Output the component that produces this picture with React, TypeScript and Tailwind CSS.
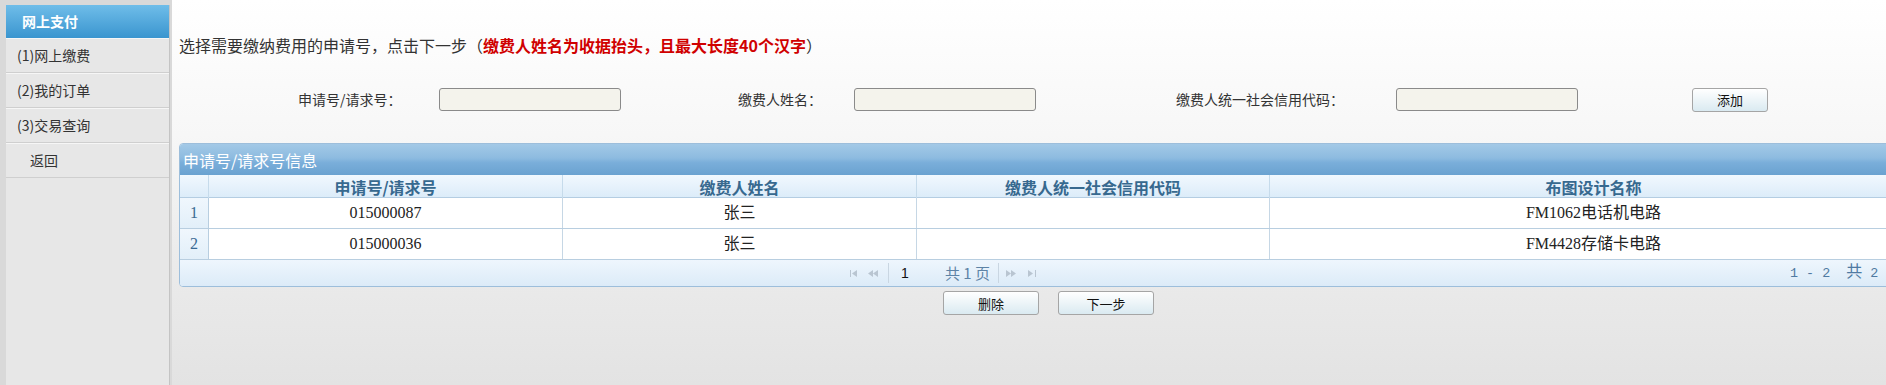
import React from "react";

const rows = [
  { n: 1, id: "015000087", name: "张三", code: "", design: "FM1062电话机电路" },
  { n: 2, id: "015000036", name: "张三", code: "", design: "FM4428存储卡电路" },
];

const navItems = [
  { label: "(1)网上缴费", indent: false },
  { label: "(2)我的订单", indent: false },
  { label: "(3)交易查询", indent: false },
  { label: "返回", indent: true },
];

function FirstIcon() {
  return (
    <svg width="8" height="7" viewBox="0 0 8 7" className="block">
      <rect x="0" y="0" width="1" height="7" fill="#b9c5d1" />
      <path d="M7 0 L2 3.5 L7 7 Z" fill="#b9c5d1" />
    </svg>
  );
}
function PrevIcon() {
  return (
    <svg width="10" height="7" viewBox="0 0 10 7" className="block">
      <path d="M5 0 L0 3.5 L5 7 Z M10 0 L5 3.5 L10 7 Z" fill="#b9c5d1" />
    </svg>
  );
}
function NextIcon() {
  return (
    <svg width="10" height="7" viewBox="0 0 10 7" className="block">
      <path d="M0 0 L5 3.5 L0 7 Z M5 0 L10 3.5 L5 7 Z" fill="#b9c5d1" />
    </svg>
  );
}
function LastIcon() {
  return (
    <svg width="8" height="7" viewBox="0 0 8 7" className="block">
      <path d="M0 0 L5 3.5 L0 7 Z" fill="#b9c5d1" />
      <rect x="7" y="0" width="1" height="7" fill="#b9c5d1" />
    </svg>
  );
}

function Btn({ children, w }: { children: React.ReactNode; w: string }) {
  return (
    <button
      className={`${w} h-[24px] border border-[#a5a5a5] rounded-[3px] bg-[linear-gradient(to_bottom,#ffffff,#daeaf1)] text-[13px] text-[#111] font-['Noto_Sans_CJK_SC',sans-serif] leading-none flex items-center justify-center`}
    >
      {children}
    </button>
  );
}

export default function App() {
  return (
    <div className="w-full h-[385px] overflow-hidden font-['Noto_Sans_CJK_SC',sans-serif]">
      <div className="flex w-[1925px] h-[385px]">
        {/* Sidebar */}
        <div className="w-[172px] shrink-0 h-[385px] bg-[#d9d9d9] pt-[5px] pl-[6px] pr-[2px]">
          <div className="h-full w-[164px] bg-[#e7e7e7] border-r border-[#c4c4c4]">
            <div className="h-[33px] bg-[linear-gradient(to_bottom,#6fbde9,#3a95cf)] pl-[16px] flex items-center text-white font-bold text-[14px]">
              网上支付
            </div>
            {navItems.map((it) => (
              <div
                key={it.label}
                className={`h-[35px] border-t border-t-[#f6f6f6] border-b border-b-[#cfcfcf] flex items-center text-[14px] text-[#333] ${
                  it.indent ? "pl-[24px]" : "pl-[11px]"
                }`}
              >
                {it.label}
              </div>
            ))}
          </div>
        </div>

        {/* Main */}
        <div className="w-[1753px] shrink-0 h-[385px] px-[7px] bg-[linear-gradient(to_bottom,#ffffff_0%,#f7f7f7_35%,#ececec_65%,#e3e3e3_100%)]">
          <div className="pt-[35px] leading-[20px] text-[16px] text-[#333] whitespace-nowrap">
            选择需要缴纳费用的申请号，点击下一步（
            <span className="text-[#d00000] font-bold">缴费人姓名为收据抬头，且最大长度40个汉字</span>）
          </div>

          <div className="mt-[33px] flex items-center h-[23px] text-[14px] text-[#333] whitespace-nowrap">
            <div className="ml-[119px] w-[141px]">申请号/请求号：</div>
            <input className="w-[182px] h-[23px] bg-[#f4f3ec] border border-[#8a8a8a] rounded-[3px] outline-none" />
            <div className="ml-[117px] w-[116px]">缴费人姓名：</div>
            <input className="w-[182px] h-[23px] bg-[#f4f3ec] border border-[#8a8a8a] rounded-[3px] outline-none" />
            <div className="ml-[140px] w-[220px]">缴费人统一社会信用代码：</div>
            <input className="w-[182px] h-[23px] bg-[#f4f3ec] border border-[#8a8a8a] rounded-[3px] outline-none" />
            <div className="ml-[114px]">
              <Btn w="w-[76px]">添加</Btn>
            </div>
          </div>

          {/* Panel */}
          <div className="mt-[32px] border border-[#9dbedb] rounded-[4px] overflow-hidden bg-white">
            <div className="h-[31px] flex items-center pl-[3px] text-white text-[16px] bg-[linear-gradient(to_bottom,#a3c9e7_0%,#8dbbe0_45%,#7aaeda_60%,#6aa2d0_100%)]">
              申请号/请求号信息
            </div>
            <div className="grid grid-cols-[29px_354px_354px_353px_1fr] h-[23px] border-b border-[#b4cde2] bg-[linear-gradient(to_bottom,#f1f8fe,#dcecf9)] text-[16px] font-bold text-[#37698f]">
              <div className="border-r border-[#c6dbeb]" />
              <div className="border-r border-[#c6dbeb] flex items-center justify-center">申请号/请求号</div>
              <div className="border-r border-[#c6dbeb] flex items-center justify-center">缴费人姓名</div>
              <div className="border-r border-[#c6dbeb] flex items-center justify-center">缴费人统一社会信用代码</div>
              <div className="flex items-center justify-center">布图设计名称</div>
            </div>
            {rows.map((r) => (
              <div
                key={r.n}
                className="grid grid-cols-[29px_354px_354px_353px_1fr] h-[31px] border-b border-[#b8cee0] text-[16px] text-[#222] font-['Liberation_Serif','Noto_Sans_CJK_SC',serif]"
              >
                <div className="border-r border-[#b8cee0] bg-[linear-gradient(to_bottom,#f0f7fd,#e2eff9)] flex items-center justify-center text-[#3a6a93]">
                  {r.n}
                </div>
                <div className="border-r border-[#c6d7e5] flex items-center justify-center">{r.id}</div>
                <div className="border-r border-[#c6d7e5] flex items-center justify-center">{r.name}</div>
                <div className="border-r border-[#c6d7e5] flex items-center justify-center">{r.code}</div>
                <div className="flex items-center justify-center">{r.design}</div>
              </div>
            ))}
            <div className="h-[26px] flex items-center bg-[linear-gradient(to_bottom,#eef6fd,#dcebf8)] whitespace-nowrap">
              <div className="ml-[670px] flex items-center">
                <FirstIcon />
                <div className="ml-[10px]">
                  <PrevIcon />
                </div>
                <div className="ml-[10px] w-px h-[20px] bg-[#c9d6e2]" />
                <div className="ml-[12px] w-[40px] text-[14px] text-[#111] font-['Liberation_Sans',sans-serif]">1</div>
                <div className="ml-[4px] text-[15px] text-[#5d83a6] whitespace-pre">共 1 页</div>
                <div className="ml-[8px] w-px h-[20px] bg-[#c9d6e2]" />
                <div className="ml-[7px]">
                  <NextIcon />
                </div>
                <div className="ml-[12px]">
                  <LastIcon />
                </div>
              </div>
              <div className="ml-auto w-[127px] text-[13.4px] text-[#4f7aa2] whitespace-pre font-['Liberation_Mono','Noto_Sans_CJK_SC',monospace]">
                1 - 2  <span className="text-[16px]">共</span> 2 <span className="text-[16px]">条</span>
              </div>
            </div>
          </div>

          <div className="mt-[4px] flex justify-center gap-[19px]">
            <Btn w="w-[96px]">删除</Btn>
            <Btn w="w-[96px]">下一步</Btn>
          </div>
        </div>
      </div>
    </div>
  );
}
